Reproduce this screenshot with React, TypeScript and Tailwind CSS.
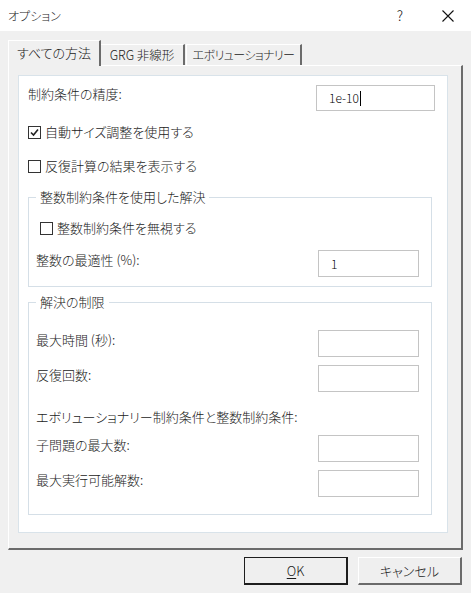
import React from 'react';

const font = { fontFamily: '"Meiryo UI", "Noto Sans CJK JP", "Noto Sans", sans-serif' };

const TextBox = ({ value, caret, w = 'w-[101px]', h = 'h-[27px]' }: { value?: string; caret?: boolean; w?: string; h?: string }) => (
    <div className={`${w} ${h} border border-[#c4c4c4] bg-white flex items-center pl-[12px] text-[12px] text-black`}>
        {value}
        {caret && <span className="w-px h-[15px] bg-black ml-px" />}
    </div>
);

const CheckBox = ({ checked, label }: { checked?: boolean; label: string }) => (
    <div className="flex items-center h-[18px] gap-[4px]">
        <div className="w-[13px] h-[13px] border border-[#333] bg-white flex items-center justify-center">
            {checked && (
                <svg width="9" height="9" viewBox="0 0 9 9">
                    <path d="M1 4.5 L3.5 7 L8 1.5" fill="none" stroke="#222" strokeWidth="1.6" />
                </svg>
            )}
        </div>
        <span className="text-[13px] leading-[18px]">{label}</span>
    </div>
);

const FieldRow = ({ label, mt, value }: { label: string; mt: string; value?: string }) => (
    <div className={`flex justify-between ${mt} pl-[7px] pr-[12px]`}>
        <span className="text-[13px] leading-[18px] mt-px">{label}</span>
        <TextBox value={value} />
    </div>
);

export default function App() {
    return (
        <div className="w-[471px] h-[593px] bg-[#f0f0f0] text-[#1a1a1a] font-light overflow-hidden [font-feature-settings:'palt']" style={font}>
            {/* Title bar */}
            <div className="h-[31px] bg-white flex items-center pl-[8px]">
                <span className="text-[12px] flex-1">オプション</span>
                <span className="text-[14px] w-[20px] text-center mr-[32px]">?</span>
                <svg width="12" height="12" viewBox="0 0 12 12" className="mr-[17px]">
                    <path d="M0.5 0.5 L11.5 11.5 M11.5 0.5 L0.5 11.5" stroke="#111" strokeWidth="1.1" />
                </svg>
            </div>

            <div className="pl-[8px] pt-[9px]">
                {/* Tabs */}
                <div className="flex items-end h-[26px] relative z-10 -mb-[1px]">
                    <div className="w-[93px] h-[26px] bg-[#f0f0f0] border-t border-l border-white border-r-2 border-r-[#6b6b6b] flex items-center justify-center text-[13px] pb-[2px]">
                        すべての方法
                    </div>
                    <div className="w-[84px] h-[21px] border-t border-white border-r-2 border-r-[#6b6b6b] flex items-center justify-center text-[12.5px] mb-[1px]">
                        GRG 非線形
                    </div>
                    <div className="w-[116px] h-[21px] ml-[1px] border-t border-l border-white border-r-2 border-r-[#6b6b6b] flex items-center justify-center text-[12px] tracking-[-0.6px] mb-[1px]">
                        エボリューショナリー
                    </div>
                </div>

                {/* Tab panel */}
                <div className="w-[455px] h-[485px] border-t border-l border-white border-r-2 border-b-2 border-r-[#6b6b6b] border-b-[#6b6b6b] pt-[9px] pl-[9px]">
                    <div className="w-[430px] h-[458px] bg-white border border-[#d9e3ea] flex flex-col">
                        <div className="flex justify-between mt-[9px] pl-[9px] pr-[12px]">
                            <span className="text-[13px] leading-[18px]">制約条件の精度:</span>
                            <TextBox value="1e-10" caret w="w-[119px]" h="h-[26px]" />
                        </div>

                        <div className="mt-[12px] pl-[9px]">
                            <CheckBox checked label="自動サイズ調整を使用する" />
                        </div>
                        <div className="mt-[16px] pl-[9px]">
                            <CheckBox label="反復計算の結果を表示する" />
                        </div>

                        {/* Group: integer constraints */}
                        <fieldset className="mt-[13px] ml-[9px] w-[404px] border border-[#d5dfe7] pb-[9px]">
                            <legend className="ml-[7px] px-[4px] text-[13px] leading-[18px]">整数制約条件を使用した解決</legend>
                            <div className="mt-[13px] pl-[11px]">
                                <CheckBox label="整数制約条件を無視する" />
                            </div>
                            <FieldRow label="整数の最適性 (%):" mt="mt-[13px]" value="1" />
                        </fieldset>

                        {/* Group: limits */}
                        <fieldset className="mt-[6px] ml-[9px] w-[404px] border border-[#d5dfe7] pb-[17px]">
                            <legend className="ml-[7px] px-[4px] text-[13px] leading-[18px]">解決の制限</legend>
                            <FieldRow label="最大時間 (秒):" mt="mt-[19px]" />
                            <FieldRow label="反復回数:" mt="mt-[8px]" />
                            <div className="mt-[16px] pl-[7px] text-[13px] leading-[18px]">エボリューショナリー制約条件と整数制約条件:</div>
                            <FieldRow label="子問題の最大数:" mt="mt-[9px]" />
                            <FieldRow label="最大実行可能解数:" mt="mt-[8px]" />
                        </fieldset>
                    </div>
                </div>

                {/* Buttons */}
                <div className="flex justify-end gap-[10px] mt-[7px] pr-[9px]">
                    <button className="w-[104px] h-[28px] bg-[#efefef] border border-[#1e1e1e] border-r-2 border-b-2 text-[13px]">
                        <span className="underline underline-offset-2">O</span>K
                    </button>
                    <button className="w-[104px] h-[28px] bg-[#efefef] border-t border-l border-white border-r-2 border-b-2 border-r-[#6b6b6b] border-b-[#6b6b6b] text-[13px]">
                        キャンセル
                    </button>
                </div>
            </div>
        </div>
    );
}
